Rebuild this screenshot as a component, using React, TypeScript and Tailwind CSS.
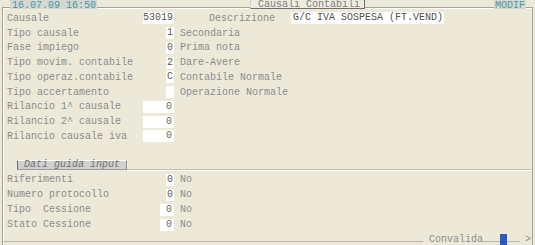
import React from 'react'

type Row = { label: string; value?: string; box: 'wide' | 'char' | 'mid'; desc?: string }

const mainRows: Row[] = [
  { label: 'Tipo causale', value: '1', box: 'char', desc: 'Secondaria' },
  { label: 'Fase impiego', value: '0', box: 'char', desc: 'Prima nota' },
  { label: 'Tipo movim. contabile', value: '2', box: 'char', desc: 'Dare-Avere' },
  { label: 'Tipo operaz.contabile', value: 'C', box: 'char', desc: 'Contabile Normale' },
  { label: 'Tipo accertamento', value: '', box: 'char', desc: 'Operazione Normale' },
  { label: 'Rilancio 1^ causale', value: '0', box: 'wide' },
  { label: 'Rilancio 2^ causale', value: '0', box: 'wide' },
  { label: 'Rilancio causale iva', value: '0', box: 'wide' },
]

const guideRows: Row[] = [
  { label: 'Riferimenti', value: '0', box: 'char', desc: 'No' },
  { label: 'Numero protocollo', value: '0', box: 'char', desc: 'No' },
  { label: 'Tipo  Cessione', value: '0', box: 'mid', desc: 'No' },
  { label: 'Stato Cessione', value: '0', box: 'mid', desc: 'No' },
]

function Field({ value, box }: { value?: string; box: Row['box'] }) {
  if (box === 'char')
    return <div className="w-[8px] h-[12px] bg-white text-[#5a5a5a] leading-[12px] text-center">{value}</div>
  if (box === 'mid')
    return <div className="w-[14px] h-[12px] bg-white text-[#6a6a6a] leading-[12px] text-right pr-[2px]">{value}</div>
  return <div className="w-[31px] h-[12px] bg-white text-[#6a6a6a] leading-[12px] text-right pr-[2px]">{value}</div>
}

function FormRow({ row, h }: { row: Row; h: string }) {
  return (
    <div className={`flex items-center ${h}`}>
      <div className="w-[136px] whitespace-pre">{row.label}</div>
      <div className="w-[31px] flex justify-end">
        <Field value={row.value} box={row.box} />
      </div>
      {row.desc && <div className="ml-[6px] whitespace-pre">{row.desc}</div>}
    </div>
  )
}

export default function App() {
  return (
    <div className="relative w-[535px] h-[245px] overflow-hidden bg-[#ece9d8] text-[10px] text-[#8c8c8c] font-['Liberation_Mono',monospace]">
      {/* frame */}
      <div className="ml-[2px] mt-[7px] w-[531px] h-[238px] border-l border-t border-r border-[#a5a396] shadow-[inset_1px_1px_0_0_#ffffff] flex flex-col pl-[4px] pt-[3px]">
        {/* Causale */}
        <div className="flex items-center h-[14.75px]">
          <div className="w-[136px]">Causale</div>
          <div className="w-[31px] h-[12px] bg-white text-[#555] leading-[12px] text-right pr-[1px]">53019</div>
          <div className="ml-[35px] w-[66px]">Descrizione</div>
          <div className="ml-[16px] w-[153px] h-[12px] bg-white text-[#4e4e4e] leading-[12px] pl-[2px] whitespace-pre">G/C IVA SOSPESA (FT.VEND)</div>
        </div>
        {mainRows.map((r) => (
          <FormRow key={r.label} row={r} h="h-[14.75px]" />
        ))}

        {/* Dati guida input */}
        <div className="flex h-[10px] mt-[16px] -ml-[4px] pr-[1px]">
          <div className="w-[14px]" />
          <div className="w-[110px] h-[10px] bg-[#d0d0cd] border-l border-l-[#6b6b6b] border-t border-t-white border-r border-r-[#8c8c8c] border-b border-b-[#9c9c9c] italic text-[#727272] leading-[8px] pl-[6px] whitespace-pre">
            Dati guida input
          </div>
          <div className="flex-1 h-[10px] border-b border-[#c4c1b2] shadow-[0_1px_0_0_#ffffff]" />
        </div>
        <div className="mt-[2.5px]">
          {guideRows.map((r) => (
            <FormRow key={r.label} row={r} h="h-[15px]" />
          ))}
        </div>

        {/* bottom bar */}
        <div className="mt-auto flex items-start h-[11px] -ml-[4px]">
          <div className="flex-1 mt-[7px] h-px bg-[#b9b6a7]" />
          <div className="ml-[6px] leading-[11px] text-[#8c8c8c]">Convalida</div>
          <div className="w-[17px] mt-[7px] h-px bg-[#b9b6a7]" />
          <div className="w-[7px] h-[11px] bg-[#2a5bc4]" />
          <div className="w-[13px] mt-[7px] h-px bg-[#b9b6a7]" />
          <div className="ml-[5px] w-[7px] leading-[11px] text-[#8c8c8c]">&gt;</div>
        </div>
      </div>

      {/* header overlays */}
      <div className="absolute left-[10px] top-0 w-[87px] h-[9px] bg-[#d6d6d3] text-[#3f9c9c] leading-[11px] pl-[2px] whitespace-pre">
        16.07.09 16:50
      </div>
      <div className="absolute left-[250px] top-0 w-[115px] h-[9px] bg-[#efecdf] border-l border-l-[#cfcfcf] border-r border-r-[#6f6f6f] border-b border-b-[#6f6f6f] text-[#7d7d7d] leading-[10px] pl-[7px] whitespace-pre">
        Causali Contabili
      </div>
      <div className="absolute left-[494px] top-0 w-[32px] h-[9px] bg-[#d8d8d2] text-[#3f9c9c] leading-[11px] pl-[1px]">
        MODIF
      </div>
    </div>
  )
}
